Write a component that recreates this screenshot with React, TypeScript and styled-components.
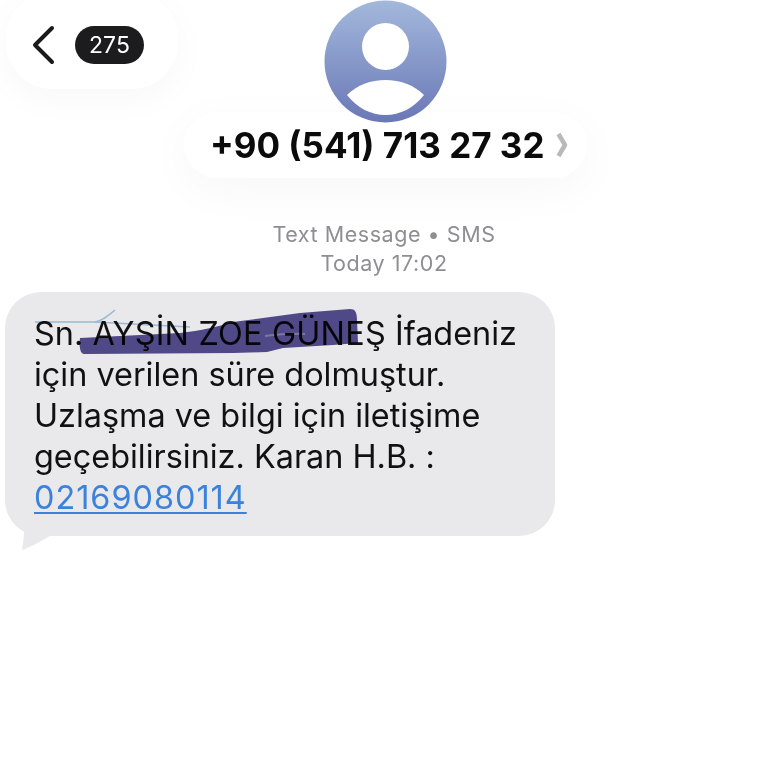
import React from "react";
import styled, { createGlobalStyle } from "styled-components";

const Global = createGlobalStyle`
  html, body { margin: 0; padding: 0; background: #fff; }
  body { font-family: Inter, "Liberation Sans", sans-serif; }
`;

const Page = styled.div`
  width: 768px;
  height: 768px;
  overflow: hidden;
  position: relative;
  display: flex;
  flex-direction: column;
  background: #fff;
`;

const Header = styled.header`
  height: 178px;
  position: relative;
`;

const BackPill = styled.div`
  position: absolute;
  left: 6px;
  top: -8px;
  width: 172px;
  height: 97px;
  border-radius: 46px;
  background: #fff;
  box-shadow: 0 10px 36px rgba(0, 0, 0, 0.03);
  display: flex;
  align-items: center;
  padding: 8px 0 0 24px;
  box-sizing: border-box;
  gap: 19px;
`;

const Badge = styled.span`
  width: 69px;
  height: 38px;
  border-radius: 19px;
  background: #1c1c1e;
  color: #fff;
  font-size: 23px;
  line-height: 38px;
  text-align: center;
`;

const Avatar = styled.svg`
  position: absolute;
  left: 324px;
  top: 0;
  width: 123px;
  height: 123px;
`;

const NamePill = styled.div`
  position: absolute;
  left: 184px;
  top: 112px;
  width: 403px;
  height: 66px;
  border-radius: 33px;
  background: #fff;
  box-shadow: 0 12px 48px rgba(0, 0, 0, 0.035);
  display: flex;
  align-items: center;
  padding-left: 26px;
  box-sizing: border-box;
  gap: 11px;
  font-weight: 700;
  font-size: 35px;
  color: #0b0b0b;
`;

const Meta = styled.div`
  margin-top: 42px;
  text-align: center;
  color: #8e8e93;
  font-size: 21.5px;
  line-height: 29px;
  letter-spacing: 0.55px;
`;

const BubbleWrap = styled.div`
  position: relative;
  margin: 14px 0 0 5px;
  width: 550px;
`;

const Bubble = styled.div`
  position: relative;
  box-sizing: border-box;
  height: 244px;
  padding: 21px 0 0 29px;
  background: #e9e9eb;
  border-radius: 36px;
  font-size: 32.4px;
  line-height: 41px;
  color: #111;
  white-space: nowrap;
`;

const Name = styled.span`
  letter-spacing: 0.2px;
`;

const Tail = styled.svg`
  position: absolute;
  left: 10px;
  top: 225px;
  width: 50px;
  height: 36px;
`;

const Scribble = styled.svg`
  position: absolute;
  left: 25px;
  top: 14px;
  width: 345px;
  height: 60px;
  pointer-events: none;
  mix-blend-mode: multiply;
  filter: blur(0.6px);
`;

const PhoneLink = styled.span`
  color: #3a82dc;
  letter-spacing: 1px;
  text-decoration: underline;
  text-decoration-thickness: 2px;
  text-underline-offset: 3px;
`;

export default function App() {
  return (
    <Page>
      <Global />
      <Header>
        <BackPill>
          <svg width="26" height="42" viewBox="0 0 26 42" fill="none">
            <path d="M22 4 L5 21 L22 38" stroke="#1a1a1a" strokeWidth="4" strokeLinecap="round" strokeLinejoin="round" />
          </svg>
          <Badge>275</Badge>
        </BackPill>
        <NamePill>
          <span>+90 (541) 713 27 32</span>
          <svg width="12" height="26" viewBox="0 0 12 26" fill="none">
            <path d="M2.5 2 L9 13 L2.5 24" stroke="#b9b9bb" strokeWidth="4.5" strokeLinejoin="round" />
          </svg>
        </NamePill>
        <Avatar viewBox="0 0 123 123">
          <defs>
            <linearGradient id="av" x1="0" y1="0" x2="0" y2="1">
              <stop offset="0" stopColor="#a3b8dc" />
              <stop offset="1" stopColor="#6a78b6" />
            </linearGradient>
          </defs>
          <circle cx="61.5" cy="61.5" r="61" fill="url(#av)" />
          <circle cx="61.5" cy="46.5" r="23.5" fill="#fff" />
          <path d="M23 95 C33 85 47 80 61.5 80 C76 80 90 85 100 95 C90 108 76 115 61.5 115 C47 115 33 108 23 95 Z" fill="#fff" />
        </Avatar>
      </Header>
      <Meta>
        Text Message • SMS
        <br />
        Today 17:02
      </Meta>
      <BubbleWrap>
        <Tail viewBox="0 0 50 36">
          <path d="M3 0 L9 13 C9 20 8 28 7 33 C18 29 26 24 35 19 L35 0 Z" fill="#e9e9eb" />
        </Tail>
        <Bubble>
          Sn. <Name>AYŞİN ZOE GÜNEŞ</Name> İfadeniz
          <br />
          için verilen süre dolmuştur.
          <br />
          Uzlaşma ve bilgi için iletişime
          <br />
          geçebilirsiniz. Karan H.B. :
          <br />
          <PhoneLink>02169080114</PhoneLink>
          <Scribble viewBox="0 0 345 60">
            <path d="M50 32 L150 27 C170 25 190 20 203 16 L270 7 L320 3 C325 3 327 6 327 14 L328 37 L303 39 L253 42 L237 46 L203 47 L54 48 C50 48 49 40 50 32 Z" fill="#565092" />
            <path d="M235 30 C250 28 262 27 275 28" stroke="#8682b0" strokeWidth="2" fill="none" />
            <path d="M5 16 L65 16 C72 15 78 10 85 4" stroke="#a9cbe8" strokeWidth="1.5" fill="none" />
            <path d="M65 16 L160 21" stroke="#a9cbe8" strokeWidth="1.5" fill="none" />
          </Scribble>
        </Bubble>
      </BubbleWrap>
    </Page>
  );
}
